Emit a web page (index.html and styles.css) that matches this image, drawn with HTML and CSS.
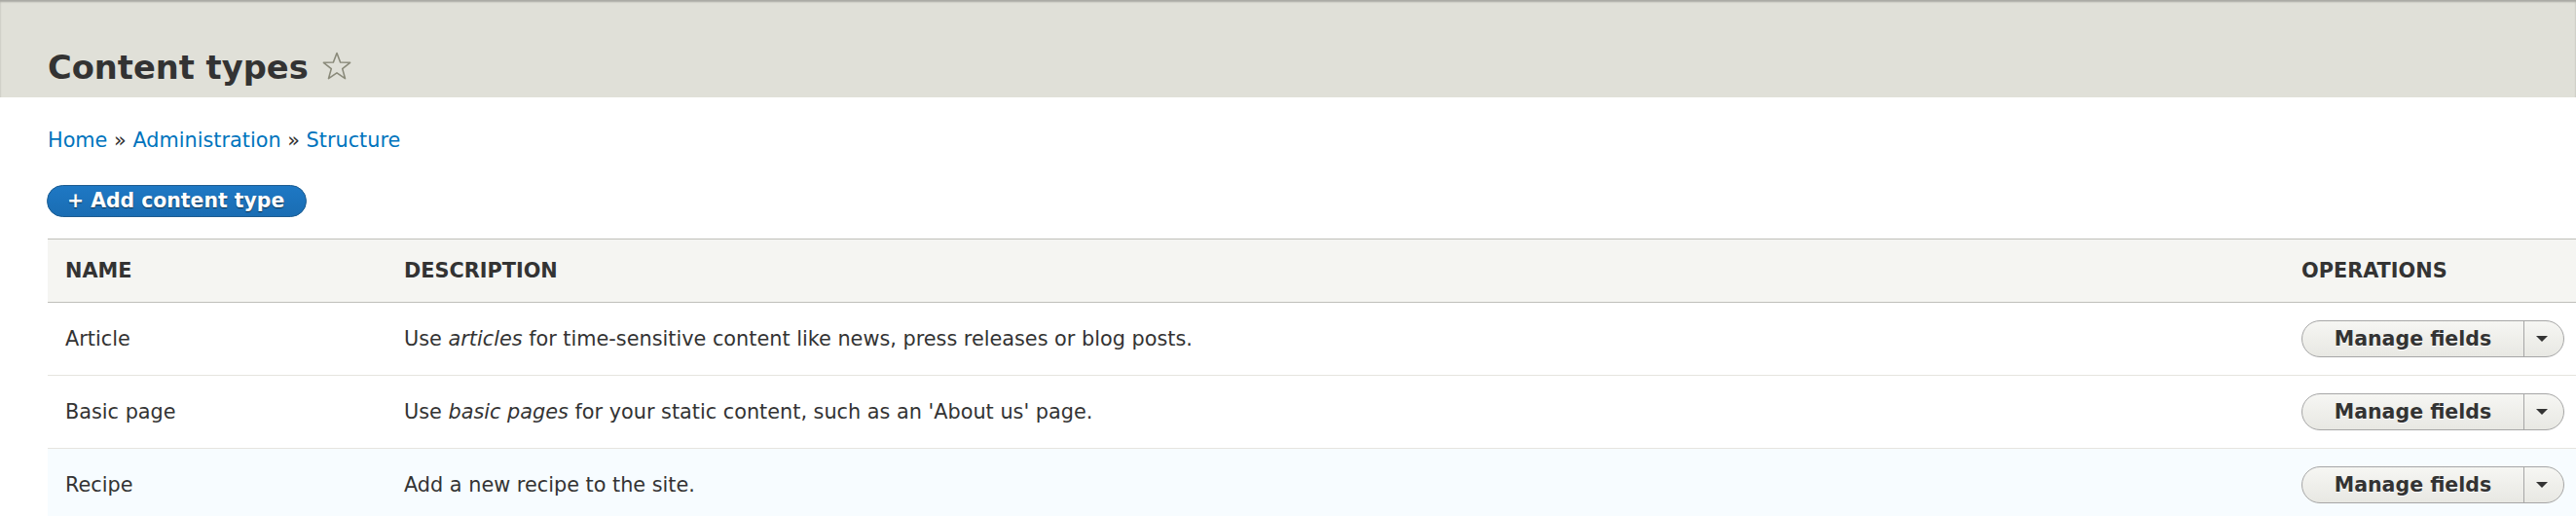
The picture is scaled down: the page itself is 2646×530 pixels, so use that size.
FILE: index.html
```html
<!DOCTYPE html>
<html lang="en">
<head>
<meta charset="utf-8">
<title>Content types</title>
<link rel="stylesheet" href="styles.css">
</head>
<body>
<header class="page-header">
  <h1 class="page-title">Content types <svg class="star" width="30" height="30" viewBox="0 0 30 30" aria-hidden="true"><polygon points="15,1.5 18.6,11 28.6,11.3 20.7,17.6 23.5,27.6 15,21.8 6.5,27.6 9.3,17.6 1.4,11.3 11.4,11" fill="none" stroke="#8a8a7a" stroke-width="1.6" stroke-linejoin="round"/></svg></h1>
</header>
<main class="content">
  <nav class="breadcrumb">
    <a href="#">Home</a> <span class="sep">»</span> <a href="#">Administration</a> <span class="sep">»</span> <a href="#">Structure</a>
  </nav>
  <div class="actions">
    <a class="button-primary" href="#">+ Add content type</a>
  </div>
  <table class="types">
    <colgroup>
      <col class="col-name">
      <col class="col-desc">
      <col class="col-ops">
    </colgroup>
    <thead>
      <tr><th>Name</th><th>Description</th><th>Operations</th></tr>
    </thead>
    <tbody>
      <tr>
        <td>Article</td>
        <td>Use <em>articles</em> for time-sensitive content like news, press releases or blog posts.</td>
        <td><div class="dropbutton"><a class="drop-main" href="#">Manage fields</a><span class="drop-toggle"><span class="caret"></span></span></div></td>
      </tr>
      <tr>
        <td>Basic page</td>
        <td>Use <em>basic pages</em> for your static content, such as an 'About us' page.</td>
        <td><div class="dropbutton"><a class="drop-main" href="#">Manage fields</a><span class="drop-toggle"><span class="caret"></span></span></div></td>
      </tr>
      <tr class="hover">
        <td>Recipe</td>
        <td>Add a new recipe to the site.</td>
        <td><div class="dropbutton"><a class="drop-main" href="#">Manage fields</a><span class="drop-toggle"><span class="caret"></span></span></div></td>
      </tr>
    </tbody>
  </table>
</main>
</body>
</html>
```

FILE: styles.css
```css
html, body {
  margin: 0;
  padding: 0;
  background: #ffffff;
}
body {
  font-family: "DejaVu Sans", "Liberation Sans", sans-serif;
  font-size: 20.8px;
  color: #333333;
  overflow: hidden;
}
.page-header {
  height: 100px;
  box-sizing: border-box;
  padding: 50px 0 0 49px;
  background: #e0e0d8;
  box-shadow: inset 0 2px 2px rgba(0, 0, 0, 0.25);
}
.page-title {
  margin: 0;
  font-size: 33.7px;
  line-height: 40.8px;
  font-weight: bold;
  color: #333333;
  display: flex;
  align-items: center;
  gap: 14px;
}
.star {
  display: block;
  margin-top: -4px;
}
.content {
  padding: 29px 0 0 49px;
}
.breadcrumb {
  line-height: 30.6px;
}
.breadcrumb a {
  color: #0074bd;
  text-decoration: none;
}
.breadcrumb .sep {
  color: #333333;
}
.actions {
  margin-top: 30px;
  display: flex;
}
.button-primary {
  display: inline-block;
  box-sizing: border-box;
  height: 33px;
  line-height: 31px;
  padding: 0 22px 0 20px;
  margin-left: -1px;
  border: 1px solid #1e5c90;
  border-radius: 20em;
  background-color: #0071b8;
  background-image: linear-gradient(to top, #1a6db3, #1e78c4);
  color: #ffffff;
  font-size: 20.4px;
  font-weight: bold;
  text-decoration: none;
  text-shadow: 0 1px 1px rgba(0, 0, 0, 0.6);
}
.types {
  margin-top: 22px;
  width: 100%;
  border-collapse: collapse;
  table-layout: fixed;
}
.col-name { width: 348px; }
.col-ops { width: 300px; }
.types th {
  height: 64px;
  padding: 0 18px;
  text-align: left;
  text-transform: uppercase;
  font-weight: bold;
  background: #f5f5f2;
  border-top: 1px solid #bfbfba;
  border-bottom: 1px solid #bfbfba;
  vertical-align: middle;
}
.types td {
  height: 74px;
  padding: 0 12px 0 18px;
  border-bottom: 1px solid #e6e4df;
  vertical-align: middle;
  white-space: nowrap;
}
.types tr.hover td {
  background: #f7fcff;
}
.dropbutton {
  display: flex;
  width: 270px;
  height: 38px;
  box-sizing: border-box;
  border: 1px solid #a6a6a6;
  border-radius: 20em;
  background-image: linear-gradient(to bottom, #f6f6f3, #e8e8e3);
  overflow: hidden;
  font-size: 20.5px;
}
.drop-main {
  flex: 1;
  display: flex;
  align-items: center;
  justify-content: center;
  color: #333333;
  font-weight: bold;
  text-decoration: none;
  text-shadow: 0 1px 0 #ffffff;
  border-right: 1px solid #a6a6a6;
}
.drop-toggle {
  width: 40px;
  display: flex;
  align-items: center;
  justify-content: center;
}
.caret {
  width: 0;
  height: 0;
  border-left: 6.5px solid transparent;
  border-right: 6.5px solid transparent;
  border-top: 6px solid #333333;
  margin-right: 4px;
  margin-top: 1px;
}
```
